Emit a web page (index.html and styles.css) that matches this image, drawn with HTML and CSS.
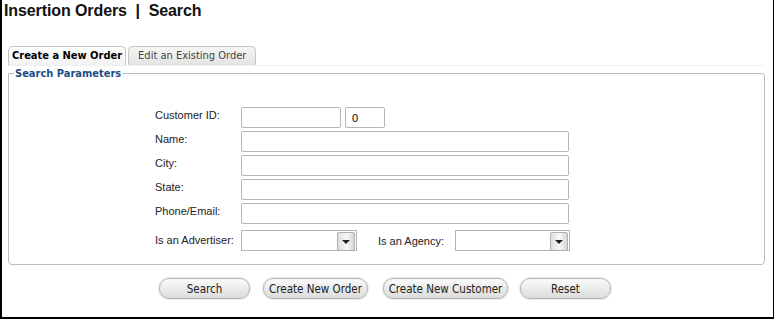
FILE: index.html
```html
<!DOCTYPE html>
<html lang="en">
<head>
  <meta charset="UTF-8" />
  <title>Insertion Orders | Search</title>
  <link rel="stylesheet" href="styles.css">
</head>
<body>
  <div class="frame">
    <h1 class="page-title">Insertion Orders &nbsp;|&nbsp; Search</h1>

    <!-- Tabs -->
    <div class="tabs">
      <div class="tab active">Create a New Order</div>
      <div class="tab">Edit an Existing Order</div>
    </div>

    <fieldset class="params">
      <legend>Search Parameters</legend>
      <div class="form-grid">
        <label class="lbl">Customer ID:</label>
        <div class="pair">
          <input class="txt id-input" type="text" />
          <input class="txt num-input" type="text" value="0" />
        </div>
        <label class="lbl">Name:</label>
        <input class="txt wide" type="text" />
        <label class="lbl">City:</label>
        <input class="txt wide" type="text" />
        <label class="lbl">State:</label>
        <input class="txt wide" type="text" />
        <label class="lbl">Phone/Email:</label>
        <input class="txt wide" type="text" />
        <label class="lbl mid">Is an Advertiser:</label>
        <div class="pair last-row">
          <div class="dropdown adv"><span class="drop-btn"></span></div>
          <span class="lbl-inline">Is an Agency:</span>
          <div class="dropdown agency"><span class="drop-btn"></span></div>
        </div>
      </div>
    </fieldset>

    <div class="actions">
      <button class="pill w-search">Search</button>
      <button class="pill w-order">Create New Order</button>
      <button class="pill w-cust">Create New Customer</button>
      <button class="pill w-reset">Reset</button>
    </div>
  </div>
</body>
</html>
```

FILE: styles.css
```css
body {
  margin: 0;
  background: #fff;
  font-family: 'Liberation Sans', Arial, sans-serif;
}
.frame {
  box-sizing: border-box;
  width: 774px;
  height: 319px;
  border-left: 2px solid #000;
  border-right: 1px solid #000;
  border-bottom: 2px solid #000;
  padding: 0 8px 0 6px;
}
.page-title {
  margin: 0 0 0 -4px;
  padding: 2px 0 0 0;
  font-size: 16px;
  line-height: 18px;
  font-weight: bold;
  color: #111;
  letter-spacing: -0.1px;
}
.tabs {
  display: flex;
  margin-top: 26px;
  height: 19px;
  border-bottom: 1px solid #f0f0f0;
  gap: 2px;
}
.tab {
  font-family: 'DejaVu Sans Condensed', 'DejaVu Sans', sans-serif;
  font-size: 11px;
  line-height: 18px;
  padding: 0 9px 0 9px;
  border: 1px solid #c4c4c4;
  border-bottom: none;
  border-radius: 5px 5px 0 0;
  background: linear-gradient(#f6f6f6, #e3e3e3);
  color: #444;
}
.tab.active {
  padding: 0 3px;
  background: linear-gradient(#ffffff, #f2f2f2);
  color: #000;
  font-weight: bold;
}
.params {
  margin: 1px 0 0 0;
  padding: 0 0 14px 146px;
  border: 1px solid #bcbcbc;
  border-radius: 0 3px 4px 4px;
  height: 198px;
  box-sizing: border-box;
}
.params legend {
  font-family: 'DejaVu Sans Condensed', 'DejaVu Sans', sans-serif;
  font-size: 11px;
  font-weight: bold;
  color: #1d4c86;
  padding: 0 1px;
  margin-left: -141px;
}
.form-grid {
  display: grid;
  grid-template-columns: 86px auto;
  row-gap: 3px;
  margin-top: 27px;
  align-items: start;
}
.lbl {
  font-size: 11px;
  color: #222;
  padding-top: 2px;
}
.lbl.mid {
  padding-top: 7px;
}
.pair {
  display: flex;
  gap: 4px;
}
.txt {
  box-sizing: border-box;
  height: 21px;
  border: 1px solid #b5b5b5;
  border-radius: 2px;
  padding: 1px 6px;
  font-family: 'Liberation Sans', Arial, sans-serif;
  font-size: 11px;
  color: #000;
  background: #fff;
  margin: 0;
}
.id-input { width: 100px; }
.num-input { width: 40px; }
.wide { width: 328px; }
.last-row {
  margin-top: 3px;
  align-items: center;
  gap: 0;
}
.dropdown {
  box-sizing: border-box;
  height: 21px;
  border: 1px solid #b5b5b5;
  background: #fff;
  display: flex;
  justify-content: flex-end;
  padding: 1px;
}
.dropdown.adv { width: 116px; }
.dropdown.agency { width: 115px; }
.drop-btn {
  width: 16px;
  height: 17px;
  border: 1px solid #b0b0b0;
  border-radius: 2px;
  background: linear-gradient(90deg, #dedede, #f8f8f8 55%, #d4d4d4);
  position: relative;
}
.drop-btn::after {
  content: "";
  position: absolute;
  left: 4px;
  top: 7px;
  border-left: 4px solid transparent;
  border-right: 4px solid transparent;
  border-top: 4px solid #222;
}
.lbl-inline {
  font-size: 11px;
  color: #222;
  margin: 0 8px 0 21px;
  width: 69px;
}
.actions {
  display: flex;
  justify-content: center;
  margin-top: 13px;
  padding-right: 3px;
}
.pill {
  box-sizing: border-box;
  height: 21px;
  margin: 0 6px;
  border: 1px solid #b4b4b4;
  border-radius: 10px;
  background: linear-gradient(#fbfbfb, #e9e9e9 55%, #dcdcdc);
  box-shadow: 0 0 0 1px #ededed;
  font-family: 'DejaVu Sans Condensed', 'DejaVu Sans', sans-serif;
  font-size: 11.5px;
  color: #222;
  padding: 0;
}
.w-search { width: 91px; }
.w-order { width: 105px; margin-left: 7px; margin-right: 8px; }
.w-cust { width: 125px; margin-left: 7px; }
.w-reset { width: 91px; }
```
